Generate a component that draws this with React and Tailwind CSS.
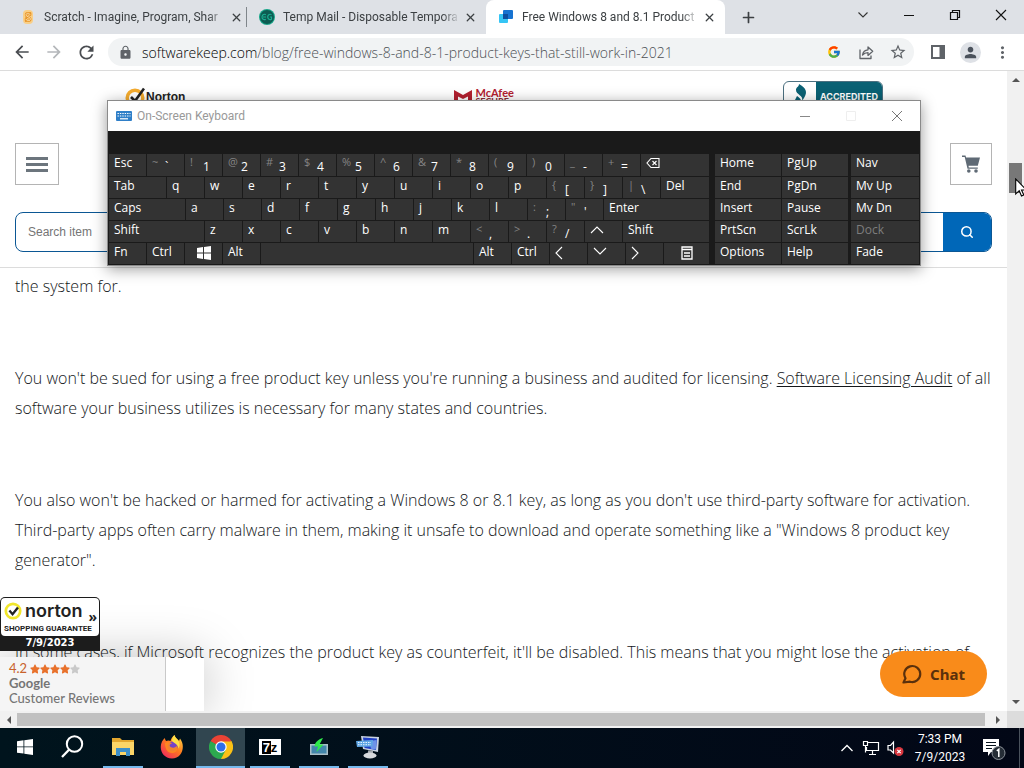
import React from 'react';
import { FcGoogle } from 'react-icons/fc';
import { MdArrowBack, MdArrowForward, MdRefresh, MdLock, MdStarBorder, MdMoreVert, MdPerson } from 'react-icons/md';
import { FaStar } from 'react-icons/fa';
import { X, Plus, Search } from 'lucide-react';

/* ---------- browser chrome ---------- */

function ScratchIcon() {
  return (
    <svg viewBox="0 0 16 16" className="size-4 shrink-0">
      <rect x="3" y="1" width="10" height="14" rx="4" fill="#f9cf87" />
      <path d="M10.2 5.700V4.200M10 5.500C9.500 3.800 6 3.800 6 6c0 2.100 4.400 1.500 4.400 4 0 2.300-4 2.300-4.500.2M6 9.500v2.300" fill="none" stroke="#e8962a" strokeWidth="2.400" strokeLinecap="round" />
      <path d="M10 5.500C9.500 3.800 6 3.800 6 6c0 2.100 4.400 1.500 4.400 4 0 2.300-4 2.300-4.500.2" fill="none" stroke="#fbe0b0" strokeWidth="0.900" strokeLinecap="round" />
    </svg>
  );
}

function TempMailIcon() {
  return (
    <svg viewBox="0 0 16 16" className="size-4 shrink-0">
      <circle cx="8" cy="8" r="8" fill="#17a589" />
      <circle cx="8" cy="8" r="7" fill="#0d5c52" />
      <path d="M6.800 5.600C4.600 4.600 3 6 3 8s1.800 3.300 3.800 2.200M12.500 5.600C10.300 4.600 8.700 6 8.700 8s2 3.300 3.800 2.200V8h-1.500M4 8h3" fill="none" stroke="#1cae92" strokeWidth="1.200" />
    </svg>
  );
}

function KeepIcon() {
  return (
    <svg viewBox="0 0 16 16" className="size-4 shrink-0">
      <rect x="5" y="1" width="10" height="9" rx="1" fill="#1673d1" />
      <rect x="1" y="5" width="9" height="9" rx="1" fill="#35c5f5" />
      <rect x="5" y="5" width="5" height="5" fill="#0c4fa0" />
    </svg>
  );
}

const tabs = [
  { title: 'Scratch - Imagine, Program, Shar', icon: <ScratchIcon /> },
  { title: 'Temp Mail - Disposable Tempora', icon: <TempMailIcon /> },
  { title: 'Free Windows 8 and 8.1 Product', icon: <KeepIcon />, active: true },
];

function TabStrip() {
  return (
    <div className="flex h-[34px] shrink-0 bg-[#dee1e6] pl-2">
      {tabs.map((tab, i) => (
        <div
          key={tab.title}
          className={
            'flex w-[239px] items-center gap-2 pl-3 pr-[6px] ' +
            (tab.active ? 'rounded-t-lg bg-white' : '')
          }
        >
          {tab.icon}
          <button className="min-w-0 flex-1 overflow-hidden whitespace-nowrap text-left font-['Roboto',sans-serif] text-[12px] text-[#3c4043] [mask-image:linear-gradient(to_right,black_90%,transparent)]">
            {tab.title}
          </button>
          <button aria-label="Close tab" className="-ml-2 grid size-5 shrink-0 place-items-center text-[#3c4043]">
            <X size={13} strokeWidth={2.4} />
          </button>
          {i === 0 && <span className="-ml-2 -mr-[6px] h-5 w-px shrink-0 bg-[#80868b]" />}
        </div>
      ))}
      <button aria-label="New tab" className="ml-px grid w-11 place-items-center text-[#3c4043]">
        <Plus size={17} strokeWidth={2.4} />
      </button>
      <div className="ml-auto flex h-[29px]">
        <button aria-label="Search tabs" className="grid w-[46px] place-items-center">
          <svg viewBox="0 0 12 12" className="size-3"><path d="M1.500 3.500L6 8l4.500-4.500" fill="none" stroke="#333" strokeWidth="1.100" /></svg>
        </button>
        <button aria-label="Minimize" className="grid w-[46px] place-items-center">
          <svg viewBox="0 0 12 12" className="size-3"><path d="M1 6.500h10" stroke="#111" strokeWidth="1" /></svg>
        </button>
        <button aria-label="Restore" className="grid w-[46px] place-items-center">
          <svg viewBox="0 0 12 12" className="size-3"><path d="M1.500 3.500h7v7h-7zM3.500 3.500v-2h7v7h-2" fill="none" stroke="#111" strokeWidth="1.200" /></svg>
        </button>
        <button aria-label="Close" className="grid w-[46px] place-items-center">
          <svg viewBox="0 0 12 12" className="size-3"><path d="M1 1l10 10M11 1L1 11" stroke="#111" strokeWidth="1.100" /></svg>
        </button>
      </div>
    </div>
  );
}

function ToolButton({ label, children }) {
  return (
    <button aria-label={label} className="grid h-7 w-8 shrink-0 place-items-center text-[#5f6368]">
      {children}
    </button>
  );
}

function Toolbar() {
  return (
    <div className="flex h-[37px] shrink-0 items-center border-b border-[#dcdcdc] bg-white px-[6px]">
      <ToolButton label="Back"><MdArrowBack size={20} color="#4a4d51" /></ToolButton>
      <ToolButton label="Forward"><MdArrowForward size={20} color="#b4b7ba" /></ToolButton>
      <ToolButton label="Reload"><MdRefresh size={21} color="#4a4d51" /></ToolButton>
      <div className="ml-[6px] mr-2 flex h-7 flex-1 items-center rounded-full bg-[#f1f3f4] pl-[10px]">
        <MdLock size={15} color="#5f6368" />
        <a href="#url" className="ml-[9px] flex-1 whitespace-nowrap text-[14px] font-light text-[#4c5054]">
          <span className="text-black">softwarekeep.com</span>/blog/free-windows-8-and-8-1-product-keys-that-still-work-in-2021
        </a>
        <ToolButton label="Google"><FcGoogle size={14} /></ToolButton>
        <ToolButton label="Share">
          <svg viewBox="0 0 16 16" className="size-4" fill="none" stroke="#5f6368" strokeWidth="1.300">
            <path d="M2 5.500v9h11v-3M4.500 11c.6-3.300 2.500-5 5.500-5.200V3l4.700 4.300L10 11.400V8.600c-2.400 0-4 .700-5.500 2.400z" strokeLinejoin="round" />
          </svg>
        </ToolButton>
        <ToolButton label="Bookmark"><MdStarBorder size={18} /></ToolButton>
      </div>
      <ToolButton label="Side panel">
        <svg viewBox="0 0 14 14" className="size-[14px]"><path d="M1 1h12v12H1z" fill="none" stroke="#5f6368" strokeWidth="2" /><path d="M8.500 1H13v12H8.500z" fill="#5f6368" /></svg>
      </ToolButton>
      <ToolButton label="Profile">
        <span className="grid size-[21px] place-items-center rounded-full bg-[#dee1e6]"><MdPerson size={17} color="#4b525c" /></span>
      </ToolButton>
      <ToolButton label="Menu"><MdMoreVert size={19} /></ToolButton>
    </div>
  );
}

/* ---------- web page ---------- */

function TrustLogos() {
  return (
    <div className="flex h-[29px] items-start justify-between pl-[125px] pr-[124px] pt-[10px]">
      <div className="flex items-start pt-[6px]">
        <svg viewBox="0 0 20 20" className="h-5 w-5">
          <circle cx="10" cy="11" r="7.800" fill="none" stroke="#f5ac2e" strokeWidth="3.500" />
          <path d="M6 10l4 4L19 1.500" fill="none" stroke="#222" strokeWidth="2.600" />
        </svg>
        <span className="pl-px font-['Liberation_Sans',sans-serif] text-[12px] font-bold leading-5 text-[#222]">Norton</span>
      </div>
      <div className="flex items-start gap-[3px] pt-[6px]">
        <svg viewBox="0 0 18 18" className="mt-[2px] size-[18px]"><path d="M0 1l9 5 9-5v14l-4 3V7.500L9 10 4 7.500V18l-4-3z" fill="#b3202f" /></svg>
        <span className="font-['Lato',sans-serif] text-[11px] font-bold leading-[11px] text-[#b3202f]">McAfee<br /><span className="block text-[9px] leading-[8px] text-[#8c2a33]">SECURE</span></span>
      </div>
      <div className="flex h-9 overflow-hidden rounded-md border border-[#4c7080] bg-white">
        <svg viewBox="0 0 32 32" className="h-8 w-8"><path d="M15 2c7 4 9 8 5 14l-2 3c2-6-6-6-6-11 0-3 3-3 3-6zM13 14c4 3 5 4 3 8l-5-4z" fill="#0a6174" /></svg>
        <span className="bg-[#0a6174] px-1 pt-2 font-['Inter',sans-serif] text-[9px] font-bold text-white">ACCREDITED</span>
      </div>
    </div>
  );
}

function SiteHeader() {
  return (
    <header className="shrink-0 border-b border-[#dcdcdc]">
      <TrustLogos />
      <div className="flex items-center justify-between px-[15px] pt-[43px]">
        <button aria-label="Menu" className="flex h-[42px] w-11 flex-col items-center justify-center gap-[3px] border border-[#b4b4b4]">
          <span className="h-[3px] w-[22px] bg-[#6c757d]" />
          <span className="h-[3px] w-[22px] bg-[#6c757d]" />
          <span className="h-[3px] w-[22px] bg-[#6c757d]" />
        </button>
        <button aria-label="Cart" className="grid size-[42px] place-items-center border border-[#b4b4b4]">
          <svg viewBox="0 0 18 18" className="size-[18px]">
            <path d="M0 .500h3.500l.6 2H18l-2.200 8.300H6.500l.3 1.700h9v1.200H5.500L2.700 2H0z" fill="#5f6a75" />
            <circle cx="6.800" cy="16" r="1.800" fill="#5f6a75" /><circle cx="14" cy="16" r="1.800" fill="#5f6a75" />
          </svg>
        </button>
      </div>
      <form className="mx-[15px] mb-[15px] mt-[27px] flex h-10 overflow-hidden rounded-lg border border-[#0b5794]">
        <input aria-label="Search item" placeholder="Search item" className="min-w-0 flex-1 pl-3 font-['Liberation_Sans',sans-serif] text-[12px] outline-none placeholder:text-[#757575]" />
        <button type="button" aria-label="Search" className="grid w-12 place-items-center bg-[#0067b8] text-white">
          <Search size={14} strokeWidth={2.600} />
        </button>
      </form>
    </header>
  );
}

function Article() {
  return (
    <article className="flex flex-col gap-[62px] whitespace-nowrap px-[15px] pt-[3px] text-[16px] font-light leading-[30px] text-[#14171a]">
      <p>the system for.</p>
      <p>
        You won't be sued for using a free product key unless you're running a business and audited for licensing.{' '}
        <a href="#audit" className="underline underline-offset-2">Software Licensing Audit</a> of all<br />
        software your business utilizes is necessary for many states and countries.
      </p>
      <p>
        You also won't be hacked or harmed for activating a Windows 8 or 8.1 key, as long as you don't use third-party software for activation.<br />
        Third-party apps often carry malware in them, making it unsafe to download and operate something like a "Windows 8 product key<br />
        generator".
      </p>
      <p>In some cases, if Microsoft recognizes the product key as counterfeit, it'll be disabled. This means that you might lose the activation of</p>
    </article>
  );
}

function Badges() {
  return (
    <div className="absolute bottom-0 left-0">
      <div className="relative z-10 mb-[6px] w-[100px] rounded-t-[5px] bg-[#1c1c1c] p-px">
        <div className="flex h-[38px] items-end rounded-[4px] bg-white pl-[3px]">
          <div className="flex-1">
            <div className="flex items-center gap-[3px]">
              <svg viewBox="0 0 20 20" className="size-[18px]">
                <circle cx="10" cy="10" r="8" fill="none" stroke="#f1e62c" strokeWidth="3" />
                <path d="M6 9.500l3.500 4L15.500 6" fill="none" stroke="#222" strokeWidth="2.600" />
              </svg>
              <span className="font-['Inter',sans-serif] text-[18px] font-semibold leading-5 text-[#222]">norton</span>
            </div>
            <div className="whitespace-nowrap font-['Roboto',sans-serif] text-[8px] font-bold leading-[15px] text-[#222]">SHOPPING GUARANTEE</div>
          </div>
          <span className="-ml-2 self-center pr-[2px] text-[14px] font-bold leading-none text-[#222]">»</span>
        </div>
        <div className="text-center font-['DejaVu_Sans',sans-serif] text-[10px] font-bold leading-[14px] text-white">7/9/2023</div>
      </div>
      <div className="flex h-[54px] items-end shadow-[0_0_50px_rgba(0,0,0,0.25)]">
        <div className="h-full w-[166px] border-r border-[#c9c9c9] bg-[#f5f5f5] pl-[9px] pt-[4px] font-['Lato',sans-serif] text-[13px] leading-[15px] text-[#757575]">
          <div className="flex items-center gap-[3px] text-[13px] text-[#c8622c]">
            4.2
            <span className="flex text-[#e8712b]">
              <FaStar size={10} /><FaStar size={10} /><FaStar size={10} /><FaStar size={10} /><FaStar size={10} color="#c9c9c9" />
            </span>
          </div>
          <div className="font-bold">Google</div>
          <div className="font-medium">Customer Reviews</div>
        </div>
        <div className="h-[51px] w-[38px] bg-white" />
      </div>
    </div>
  );
}

function ChatButton() {
  return (
    <button className="absolute bottom-[14px] right-5 flex h-[46px] w-[107px] items-center justify-center gap-2 rounded-full bg-[#f98b1a] font-['Noto_Sans',sans-serif] text-[15px] font-bold text-[#5a300c]">
      <svg viewBox="0 0 20 20" className="size-5"><path d="M1.500 18.500l2-4.200A8 8 0 1 1 8 17.700z" fill="none" stroke="#5a300c" strokeWidth="2.200" strokeLinejoin="round" /></svg>
      Chat
    </button>
  );
}

function Arrow({ d }) {
  return <svg viewBox="0 0 8 8" className="size-2"><path d={d} fill="#555" /></svg>;
}

/* ---------- on-screen keyboard ---------- */

const chevrons = {
  up: 'M1 9l6-6 6 6',
  down: 'M1 2l6 6 6-6',
  left: 'M7 1L1 7l6 6',
  right: 'M1 1l6 6-6 6',
};

function KeyGlyph({ name }) {
  if (name === 'win') {
    return <svg viewBox="0 0 14 14" className="size-[14px]"><path d="M0 2l6-.900v5.500H0zM7 1l7-1v6.600H7zM0 7.500h6V13l-6-.900zM7 7.500h7V14l-7-1z" fill="#fff" /></svg>;
  }
  if (name === 'back') {
    return <svg viewBox="0 0 14 12" className="h-3 w-[14px]"><path d="M5 1.500h8v9H5L1 6zM6.500 4l4 4M10.500 4l-4 4" fill="none" stroke="#fff" strokeWidth="1.100" /></svg>;
  }
  if (name === 'menu') {
    return <svg viewBox="0 0 12 14" className="h-[14px] w-3"><path d="M1 1h10v12H1zM1 3.500h10M3 7h6M3 10h6" fill="none" stroke="#fff" strokeWidth="1.300" /></svg>;
  }
  return <svg viewBox="0 0 14 14" className="size-[14px]"><path d={chevrons[name]} fill="none" stroke="#fff" strokeWidth="1.100" /></svg>;
}

const N = 'w-[38px]';
const letters = (s) => s.split('').map((t) => ({ t, w: N }));
const pairs = (list) => list.map(([s, t]) => ({ s, t, w: N }));

const mainRows = [
  [{ t: 'Esc', w: N }, ...pairs([['~', '`'], ['!', '1'], ['@', '2'], ['#', '3'], ['$', '4'], ['%', '5'], ['^', '6'], ['&', '7'], ['*', '8'], ['(', '9'], [')', '0'], ['_', '-'], ['+', '=']]), { g: 'back', w: 'flex-1' }],
  [{ t: 'Tab', w: 'w-[58px]' }, ...letters('qwertyuiop'), ...pairs([['{', '['], ['}', ']'], ['|', '\\']]), { t: 'Del', w: 'flex-1' }],
  [{ t: 'Caps', w: 'w-[77px]' }, ...letters('asdfghjkl'), ...pairs([[':', ';'], ['"', "'"]]), { t: 'Enter', w: 'flex-1' }],
  [{ t: 'Shift', w: 'w-[96px]' }, ...letters('zxcvbnm'), ...pairs([['<', ','], ['>', '.'], ['?', '/']]), { g: 'up', w: N }, { t: 'Shift', w: 'flex-1' }],
  [{ t: 'Fn', w: N }, { t: 'Ctrl', w: N }, { g: 'win', w: N, c: true }, { t: 'Alt', w: N }, { t: '', w: 'flex-1' }, { t: 'Alt', w: N }, { t: 'Ctrl', w: N }, { g: 'left', w: N }, { g: 'down', w: N }, { g: 'right', w: N }, { g: 'menu', w: 'w-[46px]', c: true }],
];

const navRows = [['Home', 'PgUp'], ['End', 'PgDn'], ['Insert', 'Pause'], ['PrtScn', 'ScrLk'], ['Options', 'Help']];
const windowKeys = ['Nav', 'Mv Up', 'Mv Dn', 'Dock', 'Fade'];

function Key({ k }) {
  return (
    <button
      aria-label={k.g || k.t || 'Space'}
      className={'flex min-w-0 items-start overflow-hidden border-b border-r border-[#1a1a1a] bg-[#333] text-[12px] leading-[18px] text-white ' + k.w + (k.c ? ' justify-center' : ' pl-[5px]')}
    >
      {k.s && <span className="w-[13px] shrink-0 text-left text-[11px] leading-4 text-[#858585]">{k.s}</span>}
      {k.t && <span className={k.s ? 'pt-1' : ''}>{k.t}</span>}
      {k.g && <span className="pt-[3px]"><KeyGlyph name={k.g} /></span>}
    </button>
  );
}

function KeyRow({ keys }) {
  return <div className="flex">{keys.map((k, i) => <Key key={i} k={k} />)}</div>;
}

function OnScreenKeyboard() {
  return (
    <section className="absolute left-[107px] top-[100px] z-20 w-[814px] border border-[#8a8a8a] bg-[#1a1a1a] shadow-[0_3px_14px_rgba(0,0,0,0.4)]">
      <div className="flex h-[30px] items-center bg-white pl-2 font-['Roboto',sans-serif] text-[12px] text-[#999]">
        <svg viewBox="0 0 16 10" className="mr-[5px] h-[10px] w-4">
          <rect width="16" height="10" rx="1" fill="#2f7fc8" />
          <path d="M1.500 2.500h13M1.500 5h13" stroke="#fff" strokeWidth="1.200" strokeDasharray="1.400 1" />
          <path d="M4 7.800h8" stroke="#fff" strokeWidth="1.200" />
        </svg>
        On-Screen Keyboard
        <div className="ml-auto flex">
          <button aria-label="Minimize keyboard" className="grid w-[46px] place-items-center"><svg viewBox="0 0 10 10" className="size-[10px]"><path d="M0 5.500h10" stroke="#888" /></svg></button>
          <button aria-label="Maximize keyboard" className="grid w-[46px] place-items-center"><svg viewBox="0 0 10 10" className="size-[10px]"><path d="M.5.5h9v9h-9z" fill="none" stroke="#eee" /></svg></button>
          <button aria-label="Close keyboard" className="grid w-[46px] place-items-center"><svg viewBox="0 0 10 10" className="size-[10px]"><path d="M0 0l10 10M10 0L0 10" stroke="#777" /></svg></button>
        </div>
      </div>
      <div className="flex gap-[5px] pl-px pt-[23px]">
        <div className="grid flex-1 grid-rows-[23px_22px_22px_22px_22px]">
          {mainRows.map((row, i) => <KeyRow key={i} keys={row} />)}
        </div>
        <div className="grid grid-rows-[23px_22px_22px_22px_22px]">
          {navRows.map((row) => <KeyRow key={row[0]} keys={row.map((t) => ({ t, w: 'w-[67px]' }))} />)}
        </div>
        <div className="-ml-[3px] grid grid-rows-[23px_22px_22px_22px_22px]">
          {windowKeys.map((t) => (
            <Key key={t} k={{ t, w: t === 'Dock' ? 'w-[69px] text-[#7d7d7d]!' : 'w-[69px]' }} />
          ))}
        </div>
      </div>
    </section>
  );
}

/* ---------- taskbar ---------- */

const taskIcons = [
  { label: 'Start', icon: <svg viewBox="0 0 16 16" className="size-4"><path d="M0 2.200l6.500-.900v6.200H0zM7.300 1.200L16 0v7.500H7.300zM0 8.300h6.500v6.300L0 13.700zM7.300 8.300H16V16l-8.700-1.200z" fill="#fff" /></svg> },
  { label: 'Search', icon: <svg viewBox="0 0 24 24" className="mr-1 size-6"><circle cx="14.500" cy="9" r="7.700" fill="none" stroke="#fff" strokeWidth="2" /><path d="M9.500 14.200L2 22" stroke="#fff" strokeWidth="2.300" /></svg> },
  {
    label: 'File Explorer', open: true,
    icon: (
      <svg viewBox="0 0 22 20" className="h-5 w-[22px]">
        <path d="M0 1h8l2 2h12v15H0z" fill="#e3a72f" /><path d="M0 5h22v13H0z" fill="#fbd568" />
        <path d="M4 19v-8h14v8h-4v-4H8v4z" fill="#3d8fc9" />
      </svg>
    ),
  },
  {
    label: 'Firefox',
    icon: (
      <svg viewBox="0 0 24 24" className="size-6">
        <defs><linearGradient id="ff" x1="1" y1="0" x2="0.200" y2="1"><stop offset="0" stopColor="#ffe24a" /><stop offset=".5" stopColor="#ff7b1e" /><stop offset="1" stopColor="#f0285e" /></linearGradient></defs>
        <path d="M14.500 0c.5 3 3.500 4 4.500 6l1-2.500C26 11 22 23.500 12 23.500 2.500 23.500-1.500 14 2 6.500L4.500 3l1.500 3 2.500-.5 2 .5C11 3.500 12.500 1.500 14.500 0z" fill="url(#ff)" />
        <circle cx="12.500" cy="11.500" r="5" fill="#7542c8" />
        <path d="M5 8c3-1.500 5.500-1 7 .500-2.500.500-3 2.500-1.500 3.500 3 1.500 5.500.500 6-1.500 2 5-1 7.500-4.500 7.500-4.500 0-7-4-7-10z" fill="#ff8a1f" opacity=".9" />
        <path d="M14.500 0c.5 3 3.500 4 4.500 7 1.200 3 .5 5-.5 6.500C18.500 9 13 8 12 5.500c0-2 1-4 2.500-5.500z" fill="#ffdf45" />
      </svg>
    ),
  },
  {
    label: 'Chrome', open: true, active: true,
    icon: (
      <svg viewBox="0 0 24 24" className="size-6">
        <path d="M12 12L1.600 6A12 12 0 0 1 22.400 6z" fill="#ea4335" />
        <path d="M12 12L22.400 6A12 12 0 0 1 12 24z" fill="#fbc116" />
        <path d="M12 12v12A12 12 0 0 1 1.600 6z" fill="#2da94f" />
        <path d="M12 6.500h10.600L16.800 15z" fill="#fbc116" />
        <path d="M7.200 9.300L1.600 6 12 6.500z" fill="#ea4335" />
        <path d="M16.800 14.800L12 24l-1-7z" fill="#2da94f" />
        <circle cx="12" cy="12" r="5.700" fill="#fff" /><circle cx="12" cy="12" r="4.500" fill="#2f6ee8" />
      </svg>
    ),
  },
  { label: '7-Zip', open: true, icon: <span className="flex h-4 w-[22px] items-center justify-center bg-white font-['Liberation_Sans',sans-serif] text-[13px] font-bold leading-none text-black"><span className="bg-black px-px text-white">7</span>z</span> },
  {
    label: 'Updater', open: true,
    icon: (
      <svg viewBox="0 0 20 18" className="h-[18px] w-5">
        <path d="M1 6h18v11H1z" fill="#a9bfc8" /><path d="M2.500 7.500h15v8h-15z" fill="#4286ab" />
        <path d="M14 0C9 1.500 6 4 5.500 8.500H9L7.500 14l7-7.500h-4z" fill="#2eea4a" />
      </svg>
    ),
  },
  {
    label: 'Keyboard', open: true,
    icon: (
      <svg viewBox="0 0 24 24" className="size-6">
        <path d="M5 1l18 1-1 15-15-3z" fill="#c9d3e2" /><path d="M7 2.500l14 1-1 11.500L8.500 13z" fill="#1f3fc4" />
        <path d="M14 6l6.500-1-.700 9.500-5-.800z" fill="#6d93e8" />
        <path d="M0 6l17-1-.5 6.500L1 12z" fill="#5fa6e4" /><path d="M2 7.500h13M2 9.700h13" stroke="#e6f2ff" strokeDasharray="1.500 1" />
        <path d="M12 15.500h5v4h-5z" fill="#a3a8ae" /><ellipse cx="14" cy="20.500" rx="6.500" ry="3" fill="#d8dade" />
      </svg>
    ),
  },
];

function Taskbar() {
  return (
    <footer className="flex h-10 shrink-0 bg-linear-to-r from-[#00141d] to-[#020716] text-white">
      {taskIcons.map((t) => (
        <button
          key={t.label}
          aria-label={t.label}
          className={'flex w-[49px] flex-col items-center ' + (t.active ? 'bg-[#314650]' : '')}
        >
          <span className="grid flex-1 place-items-center">{t.icon}</span>
          <span className={'h-[2px] ' + (t.active ? 'w-full bg-[#76b9ed]' : t.open ? 'w-10 bg-[#76b9ed]' : 'w-0')} />
        </button>
      ))}
      <div className="ml-auto flex items-center">
        <button aria-label="Show hidden icons" className="grid w-6 place-items-center"><svg viewBox="0 0 14 14" className="size-[14px]"><path d="M1.500 10L7 4.500l5.500 5.500" fill="none" stroke="#fff" strokeWidth="1.300" /></svg></button>
        <button aria-label="Network" className="grid w-6 place-items-center">
          <svg viewBox="0 0 18 16" className="h-4 w-[18px]" fill="none" stroke="#fff" strokeWidth="1.200"><path d="M5 2.500h11.500v8H4.500V7M10.500 10.500v3.500M7 14.500h7M1.500 1.500h4v4h-4zM3.500 5.500v7" /></svg>
        </button>
        <button aria-label="Sound muted" className="grid w-6 place-items-center">
          <svg viewBox="0 0 18 16" className="h-4 w-[18px]"><path d="M2 5.500h2.500L7.500 2v11L4.500 10H2z" fill="none" stroke="#fff" strokeWidth="1.200" /><circle cx="13" cy="11.500" r="4.500" fill="#d8373f" /><path d="M11.300 9.800l3.400 3.400M14.700 9.800l-3.400 3.400" stroke="#fff" strokeWidth="1.200" /></svg>
        </button>
        <div className="w-[66px] text-center font-['Roboto',sans-serif] text-[12px] leading-[18px]">7:33 PM<br />7/9/2023</div>
        <button aria-label="Notifications" className="grid h-10 w-[46px] place-items-center">
          <svg viewBox="0 0 24 24" className="mr-1 size-6">
            <path d="M1 3h16v13H9l-3 4V16H1z" fill="#fff" /><path d="M4 6.500h10M4 9.500h10M4 12.500h6" stroke="#06121d" strokeWidth="1.200" />
            <circle cx="16.500" cy="17" r="6.500" fill="#252d36" stroke="#8b9198" strokeWidth="1" />
            <path d="M14.800 14.800l2-1.500V21" fill="none" stroke="#fff" strokeWidth="1.500" />
          </svg>
        </button>
        <span className="mr-1 h-full w-px bg-[#4a525c]" />
      </div>
    </footer>
  );
}

export default function App() {
  return (
    <div className="relative flex h-screen w-full flex-col overflow-hidden bg-white font-['Open_Sans','Noto_Sans',sans-serif]">
      <TabStrip />
      <Toolbar />
      <div className="flex min-h-0 flex-1">
        <main className="relative min-w-0 flex-1 overflow-hidden">
          <SiteHeader />
          <Article />
          <Badges />
          <ChatButton />
        </main>
        <div className="relative flex w-[17px] flex-col items-center justify-between bg-[#f1f1f1] py-[5px]">
          <Arrow d="M0 6l4-4 4 4z" />
          <Arrow d="M0 2l4 4 4-4z" />
          <span className="absolute left-[2px] top-[92px] h-[30px] w-[13px] bg-[#787878]" />
          <svg viewBox="0 0 14 20" className="absolute left-2 top-[107px] z-30 h-5 w-[14px]"><path d="M.7 1v15l3.500-3.300 2.300 5.300 2.300-1-2.300-5h5z" fill="#fff" stroke="#000" strokeWidth="1.100" /></svg>
        </div>
      </div>
      <div className="flex h-[17px] shrink-0 bg-[#f1f1f1]">
        <span className="grid w-[17px] place-items-center"><Arrow d="M6 0L2 4l4 4z" /></span>
        <span className="my-[2px] flex-1 bg-[#c1c1c1]" />
        <span className="ml-1 grid w-[18px] place-items-center"><Arrow d="M2 0l4 4-4 4z" /></span>
        <span className="w-[17px] bg-[#dcdcdc]" />
      </div>
      <OnScreenKeyboard />
      <Taskbar />
    </div>
  );
}
